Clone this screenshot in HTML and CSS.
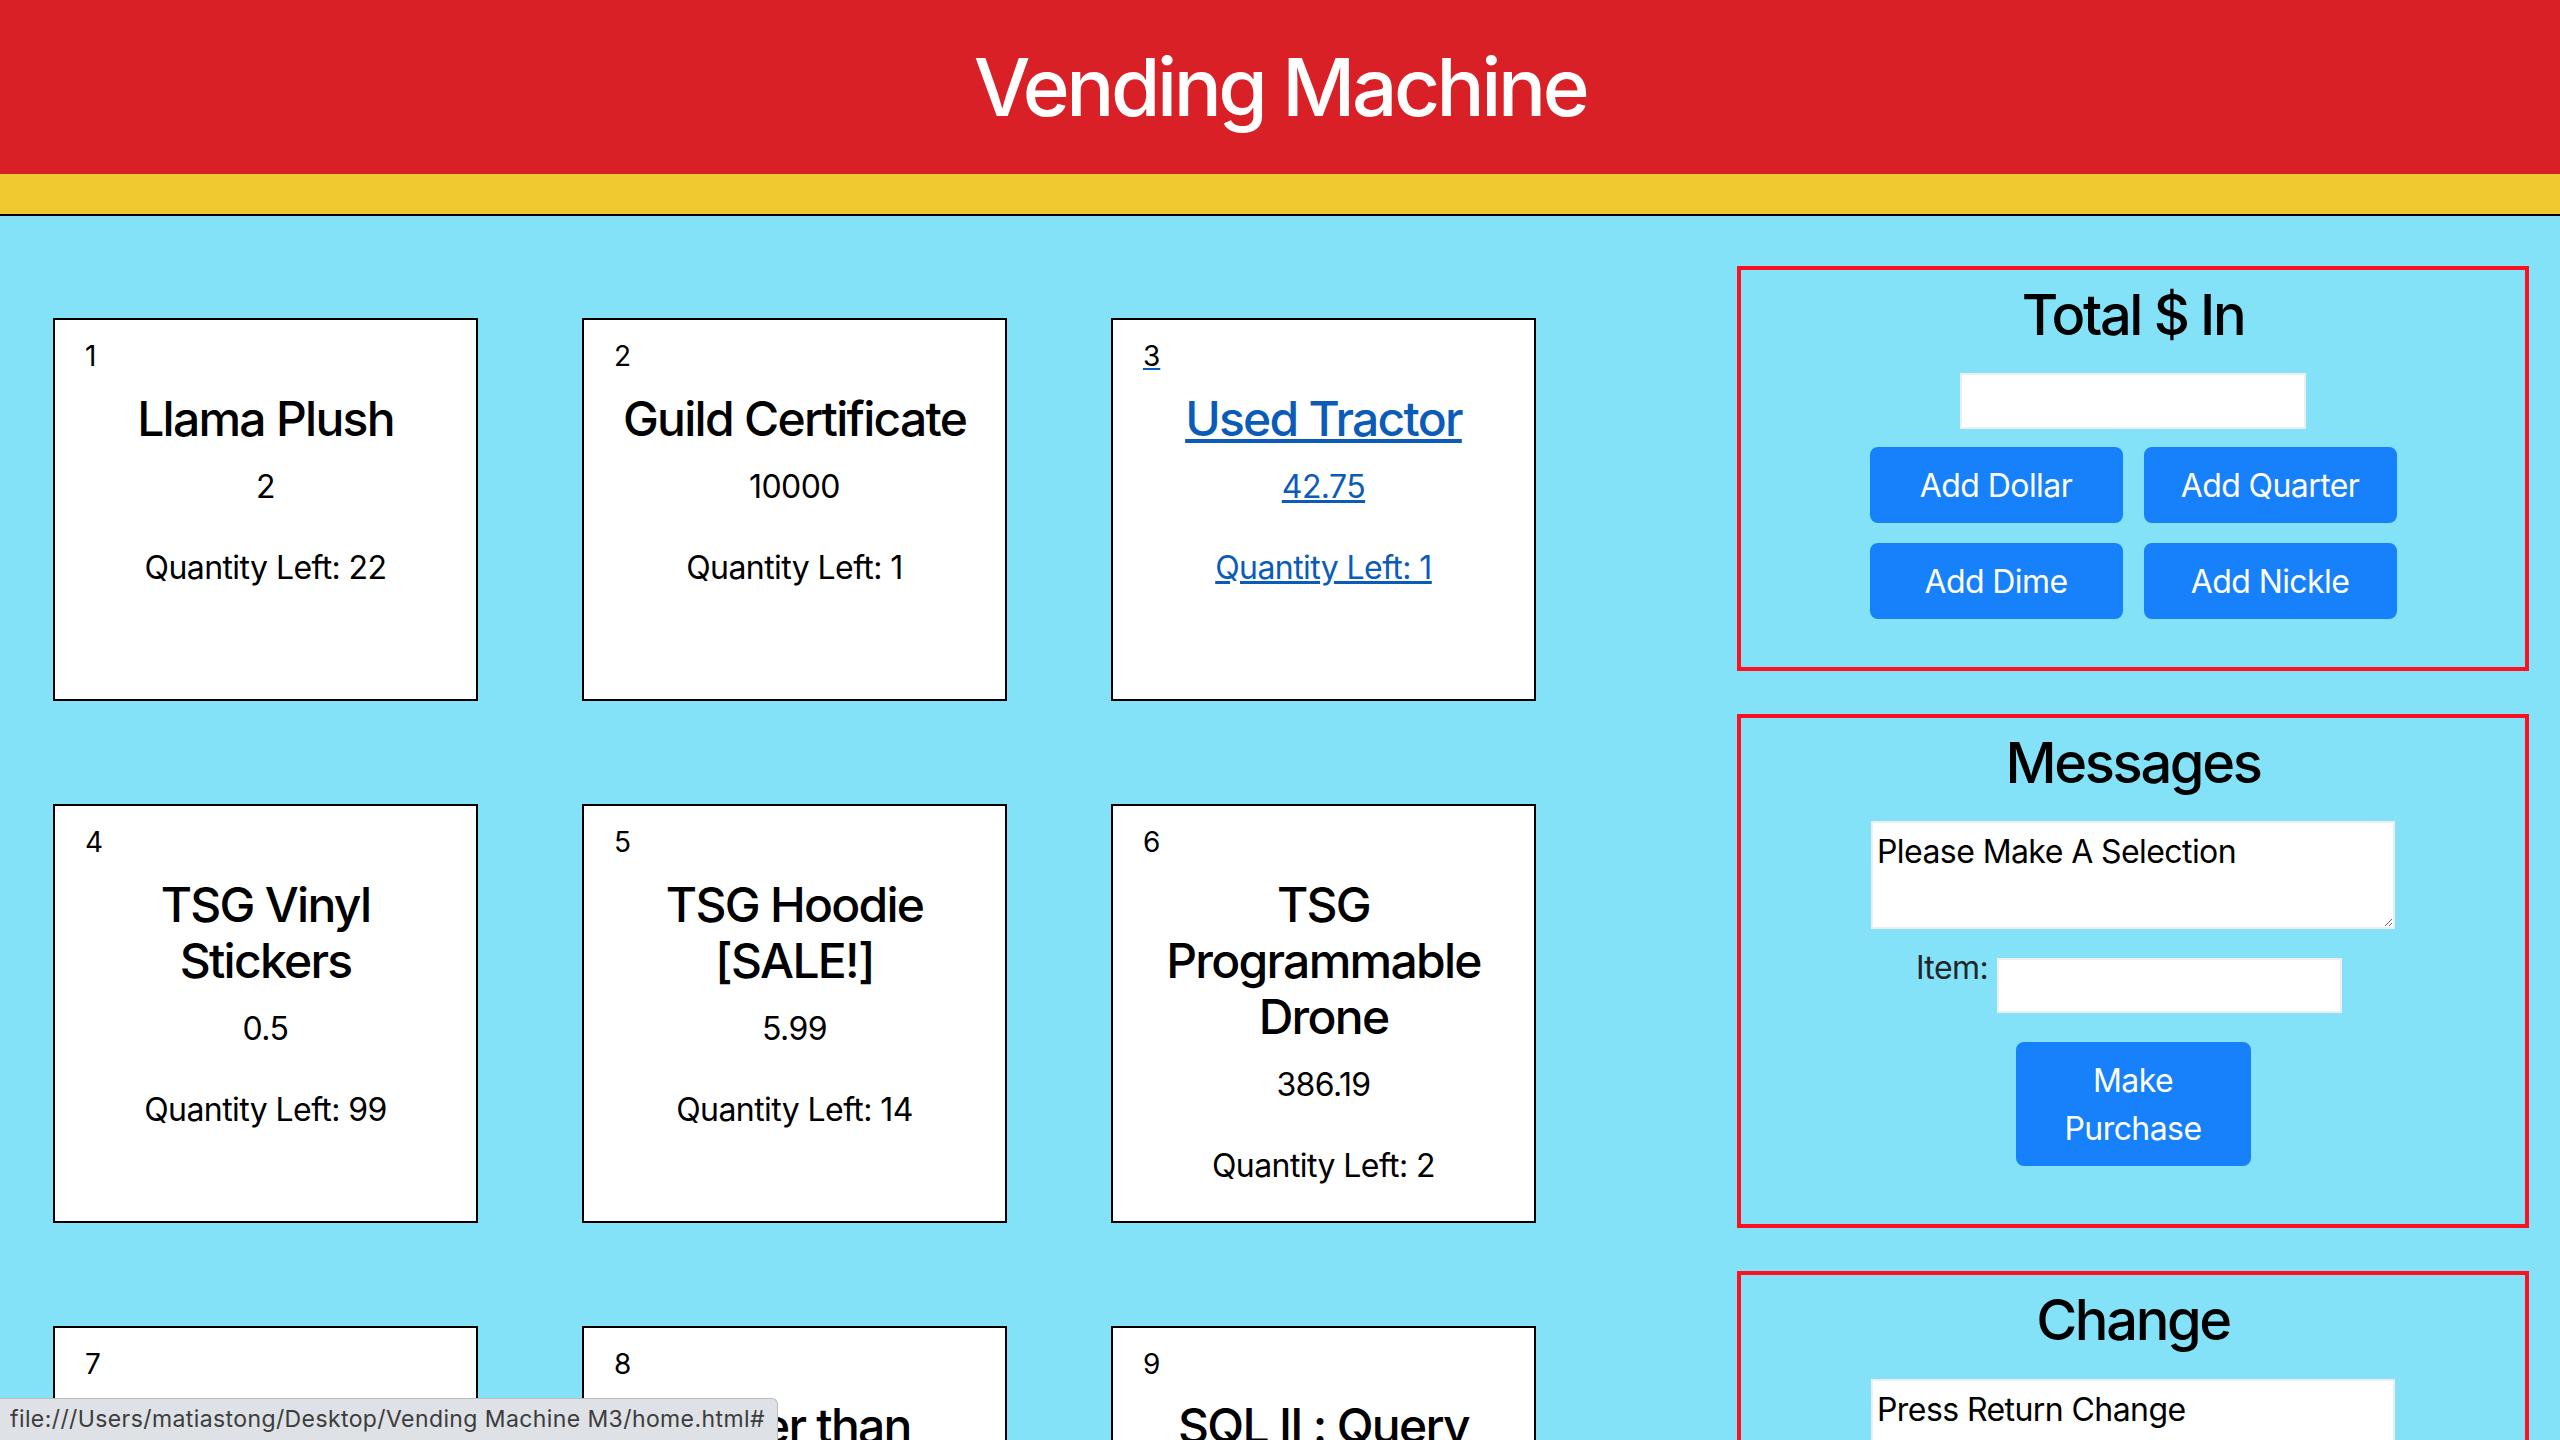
FILE: index.html
```html
<!DOCTYPE html>
<html lang="en">
<head>
<meta charset="utf-8">
<title>Vending Machine</title>
<link rel="stylesheet" href="styles.css">
</head>
<body>
<header class="top">
  <h1 class="top-title">Vending Machine</h1>
</header>
<div class="stripe"></div>
<main class="layout">
  <section class="products">
    <a class="card" href="#"><p class="num">1</p><h4 class="title">Llama Plush</h4><p class="price">2</p><p class="qty">Quantity Left: 22</p></a>
    <a class="card" href="#"><p class="num">2</p><h4 class="title">Guild Certificate</h4><p class="price">10000</p><p class="qty">Quantity Left: 1</p></a>
    <a class="card is-hover" href="#"><p class="num">3</p><h4 class="title">Used Tractor</h4><p class="price">42.75</p><p class="qty">Quantity Left: 1</p></a>
    <a class="card" href="#"><p class="num">4</p><h4 class="title">TSG Vinyl Stickers</h4><p class="price">0.5</p><p class="qty">Quantity Left: 99</p></a>
    <a class="card" href="#"><p class="num">5</p><h4 class="title">TSG Hoodie [SALE!]</h4><p class="price">5.99</p><p class="qty">Quantity Left: 14</p></a>
    <a class="card" href="#"><p class="num">6</p><h4 class="title">TSG Programmable Drone</h4><p class="price">386.19</p><p class="qty">Quantity Left: 2</p></a>
    <a class="card" href="#"><p class="num">7</p><h4 class="title">Bootcamp Coffee Mug</h4><p class="price">8.5</p><p class="qty">Quantity Left: 12</p></a>
    <a class="card" href="#"><p class="num">8</p><h4 class="title">Better than Nothing</h4><p class="price">1.25</p><p class="qty">Quantity Left: 30</p></a>
    <a class="card" href="#"><p class="num">9</p><h4 class="title">SQL II : Query Optimization</h4><p class="price">19.99</p><p class="qty">Quantity Left: 5</p></a>
  </section>
  <aside class="panel">
    <div class="box">
      <h3 class="box-title">Total $ In</h3>
      <input class="field" type="text">
      <div class="coins">
        <button class="btn" type="button">Add Dollar</button>
        <button class="btn" type="button">Add Quarter</button>
        <button class="btn" type="button">Add Dime</button>
        <button class="btn" type="button">Add Nickle</button>
      </div>
    </div>
    <div class="box box-messages">
      <h3 class="box-title">Messages</h3>
      <textarea class="note">Please Make A Selection</textarea>
      <div class="item-row">
        <label class="item-label" for="item">Item:</label>
        <input class="field item-field" id="item" type="text">
      </div>
      <button class="btn btn-purchase" type="button">Make Purchase</button>
    </div>
    <div class="box">
      <h3 class="box-title">Change</h3>
      <textarea class="note">Press Return Change</textarea>
      <button class="btn btn-purchase" type="button">Return Change</button>
    </div>
  </aside>
</main>
<div class="status">file:///Users/matiastong/Desktop/Vending Machine M3/home.html#</div>
</body>
</html>
```
FILE: styles.css
```css
html, body {
  margin: 0;
  padding: 0;
  height: 100%;
  overflow: hidden;
}
body {
  background: #83e2f7;
  font-family: "Inter", "Noto Sans", sans-serif;
  font-size: 32px;
  line-height: 1.5;
  letter-spacing: -0.018em;
  color: #000;
}
.top {
  background: #da2027;
  height: 174px;
  box-sizing: border-box;
  padding-top: 39px;
  text-align: center;
}
.top-title {
  margin: 0;
  font-size: 80px;
  font-weight: 500;
  line-height: 1.2;
  letter-spacing: -0.043em;
  color: #fff;
}
.stripe {
  height: 40px;
  background: #efc92f;
  border-bottom: 2px solid #000;
}
.layout {
  display: grid;
  grid-template-columns: 1707px 1fr;
}
.products {
  display: grid;
  grid-template-columns: repeat(3, 425px);
  column-gap: 104px;
  row-gap: 103px;
  padding: 102px 0 0 53px;
  align-content: start;
}
.card {
  display: block;
  background: #fff;
  border: 2px solid #000;
  min-height: 383px;
  box-sizing: border-box;
  padding: 15px 30px 31px;
  color: #000;
  text-decoration: none;
}
.card.is-hover {
  color: #0b5cb9;
  text-decoration: underline;
}
.num {
  margin: 0;
  font-size: 28px;
  line-height: 42px;
  letter-spacing: 0;
  color: #000;
}
.title {
  margin: 13.5px 0 0;
  font-size: 48px;
  font-weight: 500;
  line-height: 56px;
  letter-spacing: -0.036em;
  text-align: center;
}
.price {
  margin: 16px 0 0;
  text-align: center;
}
.qty {
  margin: 33px 0 0;
  text-align: center;
}
.panel {
  padding: 50px 31px 0 30px;
  display: flex;
  flex-direction: column;
  gap: 43px;
}
.box {
  border: 4px solid #ff1020;
  padding: 12px 0 48px;
  display: flex;
  flex-direction: column;
  align-items: center;
}
.box-messages {
  padding-bottom: 58px;
}
.box-title {
  margin: 0 0 24px;
  font-size: 56px;
  font-weight: 500;
  line-height: 1.2;
  letter-spacing: -0.042em;
}
.field {
  width: 346px;
  height: 56px;
  box-sizing: border-box;
  border: 2px solid #eeeeee;
  background: #fff;
  font: inherit;
  padding: 0 8px;
  margin: 0;
}
.coins {
  margin-top: 18px;
  display: grid;
  grid-template-columns: 253px 253px;
  column-gap: 21px;
  row-gap: 20px;
}
.btn {
  background: #1781fb;
  color: #fff;
  border: 2px solid #1781fb;
  border-radius: 8px;
  font: inherit;
  letter-spacing: -0.018em;
  line-height: 48px;
  padding: 13px 24px 11px;
  margin: 0;
}
.note {
  display: block;
  width: 524px;
  height: 108px;
  box-sizing: border-box;
  border: 2px solid #eeeeee;
  background: #fff;
  font: inherit;
  letter-spacing: -0.018em;
  color: #000;
  padding: 5px 4px 3px;
  margin: 0;
  resize: vertical;
}
.item-row {
  margin-top: 29px;
  display: flex;
  align-items: flex-start;
  gap: 9px;
  transform: translateX(-4px);
}
.item-label {
  font-size: 32px;
  line-height: 32px;
  margin-top: -6px;
  color: #212529;
}
.item-field {
  width: 345px;
  height: 55px;
}
.btn-purchase {
  margin-top: 29px;
  width: 235px;
}
.status {
  position: fixed;
  left: 0;
  bottom: 0;
  width: 778px;
  height: 42px;
  box-sizing: border-box;
  background: #dee1e6;
  border-top: 1px solid #b9bcc1;
  border-right: 1px solid #b9bcc1;
  border-top-right-radius: 6px;
  color: #3c3c3c;
  font-family: "Inter", "Noto Sans", sans-serif;
  font-size: 23px;
  letter-spacing: 0.4px;
  line-height: 40px;
  padding-left: 10px;
  white-space: nowrap;
  overflow: hidden;
}
```
